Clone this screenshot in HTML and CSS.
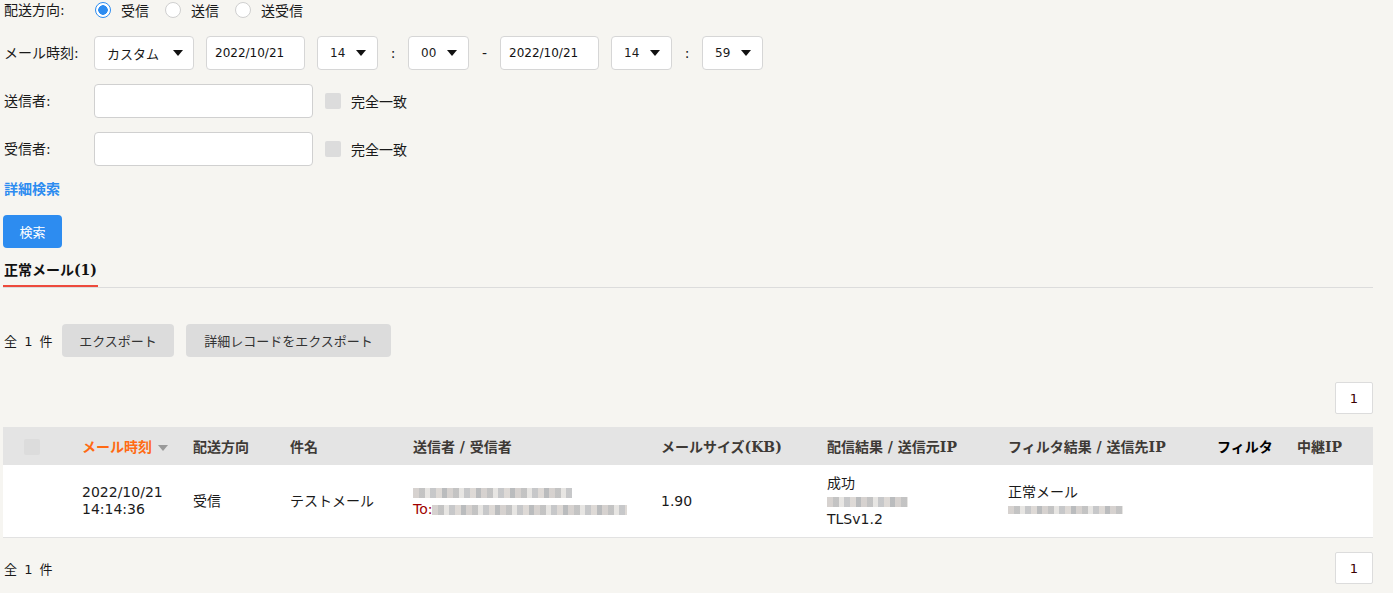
FILE: index.html
```html
<!DOCTYPE html>
<html>
<head>
  <title>メール検索</title>
  <link rel="stylesheet" href="styles.css">
</head>
<body>
  <div class="page">
    <div class="search-form">
      <div class="form-row row-radio">
        <label class="form-label">配送方向:</label>
        <span class="radio checked"></span><span class="radio-text">受信</span>
        <span class="radio"></span><span class="radio-text">送信</span>
        <span class="radio"></span><span class="radio-text">送受信</span>
      </div>

      <div class="form-row row-field">
        <label class="form-label">メール時刻:</label>
        <div class="select sel-range"><span>カスタム</span><i class="arrow"></i></div>
        <input class="date-input" type="text" value="2022/10/21">
        <div class="select sel-time"><span>14</span><i class="arrow"></i></div>
        <span class="sep">:</span>
        <div class="select sel-time"><span>00</span><i class="arrow"></i></div>
        <span class="sep dash">-</span>
        <input class="date-input" type="text" value="2022/10/21">
        <div class="select sel-time"><span>14</span><i class="arrow"></i></div>
        <span class="sep">:</span>
        <div class="select sel-time"><span>59</span><i class="arrow"></i></div>
      </div>

      <div class="form-row row-field">
        <label class="form-label">送信者:</label>
        <input class="text-input" type="text">
        <span class="checkbox"></span><span class="check-text">完全一致</span>
      </div>

      <div class="form-row row-field">
        <label class="form-label">受信者:</label>
        <input class="text-input" type="text">
        <span class="checkbox"></span><span class="check-text">完全一致</span>
      </div>

      <div class="detail-link"><a href="#">詳細検索</a></div>
      <button class="btn-primary">検索</button>
    </div>

    <div class="tab-bar">
      <span class="tab active">正常メール(1)</span>
    </div>

    <div class="toolbar">
      <span class="total">全 1 件</span>
      <button class="btn-gray btn-export">エクスポート</button>
      <button class="btn-gray btn-detail">詳細レコードをエクスポート</button>
    </div>

    <div class="pager"><span class="page-box">1</span></div>

    <table class="mail-table">
      <colgroup>
        <col style="width: 67px">
        <col style="width: 111px">
        <col style="width: 97px">
        <col style="width: 123px">
        <col style="width: 248px">
        <col style="width: 166px">
        <col style="width: 181px">
        <col style="width: 209px">
        <col style="width: 80px">
        <col style="width: 88px">
      </colgroup>
      <thead>
        <tr>
          <th class="col-check"><span class="checkbox"></span></th>
          <th class="sorted">メール時刻 <i class="sort-arrow"></i></th>
          <th>配送方向</th>
          <th>件名</th>
          <th>送信者 / 受信者</th>
          <th>メールサイズ(KB)</th>
          <th>配信結果 / 送信元IP</th>
          <th>フィルタ結果 / 送信先IP</th>
          <th class="dark">フィルタ</th>
          <th>中継IP</th>
        </tr>
      </thead>
      <tbody>
        <tr>
          <td></td>
          <td class="lines">2022/10/21<br>14:14:36</td>
          <td>受信</td>
          <td>テストメール</td>
          <td class="lines">
            <span class="blur" style="width: 159px"></span><br>
            <span class="to">To:</span><span class="blur" style="width: 195px"></span>
          </td>
          <td>1.90</td>
          <td class="lines tall">
            成功<br>
            <span class="blur" style="width: 81px"></span><br>
            TLSv1.2
          </td>
          <td class="lines">
            正常メール<br>
            <span class="blur short" style="width: 115px"></span>
          </td>
          <td></td>
          <td></td>
        </tr>
      </tbody>
    </table>

    <div class="footer-bar">
      <span class="total">全 1 件</span>
      <span class="page-box">1</span>
    </div>
  </div>
</body>
</html>
```

FILE: styles.css
```css
/* base */
body {
  margin: 0;
  background-color: #f6f5f1;
  font-family: "DejaVu Sans", "Noto Sans CJK JP", sans-serif;
  font-size: 14px;
  color: #1a1a1a;
}

.page {
  padding: 0 20px 0 3px;
}

/* search form */
.form-row {
  display: flex;
  align-items: center;
}
.row-radio {
  height: 20px;
}
.row-field {
  height: 34px;
  margin-top: 14px;
}
.row-radio + .row-field {
  margin-top: 16px;
}
.form-label {
  width: 90px;
  padding-left: 1px;
  line-height: 20px;
}

.radio {
  width: 14px;
  height: 14px;
  border: 1px solid #cfcfcf;
  border-radius: 50%;
  background: #fff;
  margin: 0 10px 0 1px;
}
.radio.checked {
  border-color: #2d8cf0;
  background: radial-gradient(circle, #2d8cf0 0 4.5px, #fff 5px);
}
.radio-text {
  margin-right: 15px;
}

.select {
  display: flex;
  align-items: center;
  justify-content: space-between;
  height: 34px;
  box-sizing: border-box;
  border: 1px solid #d6d6d6;
  border-radius: 4px;
  background: #fff;
  font-size: 13px;
}
.select span {
  font-size: 12px;
}
.sel-range {
  width: 100px;
  padding: 0 10px 0 12px;
  margin-right: 12px;
}
.sel-range span {
  font-size: 13px;
}
.sel-time {
  width: 61px;
  padding: 0 11px 0 12px;
}
.arrow {
  width: 0;
  height: 0;
  border-left: 5px solid transparent;
  border-right: 5px solid transparent;
  border-top: 6px solid #111;
}

.date-input {
  width: 99px;
  height: 34px;
  box-sizing: border-box;
  border: 1px solid #d6d6d6;
  border-radius: 4px;
  padding: 0 8px;
  margin-right: 12px;
  font-family: inherit;
  font-size: 12px;
  color: #111;
}
.sep {
  width: 30px;
  text-align: center;
  font-size: 14px;
}
.sep.dash {
  width: 31px;
}

.text-input {
  width: 219px;
  height: 34px;
  box-sizing: border-box;
  border: 1px solid #d0d0d0;
  border-radius: 4px;
  background: #fff;
  margin-right: 12px;
}
.checkbox {
  display: inline-block;
  width: 16px;
  height: 16px;
  background: #dcdcdc;
  border-radius: 2px;
  margin-right: 10px;
}

.detail-link {
  margin-top: 13px;
  line-height: 20px;
  padding-left: 1px;
}
.detail-link a {
  color: #2d8cf0;
  font-size: 14px;
  font-weight: bold;
  text-decoration: none;
}

.btn-primary {
  display: block;
  margin-top: 16px;
  width: 59px;
  height: 33px;
  border: none;
  border-radius: 4px;
  background: #2d8cf0;
  color: #fff;
  font-family: inherit;
  font-size: 13px;
}

/* tabs */
.tab-bar {
  margin-top: 4px;
  border-bottom: 1px solid #dcdcdc;
}
.tab {
  display: inline-block;
  padding: 6px 1px 3px 1px;
  line-height: 24px;
  border-bottom: 2px solid #ed4a3c;
  font-family: "DejaVu Serif", "Noto Sans CJK JP", serif;
  font-weight: bold;
  font-size: 14px;
  color: #111;
}

/* toolbar */
.toolbar {
  display: flex;
  align-items: center;
  margin-top: 36px;
}
.total {
  padding-left: 1px;
  width: 58px;
  font-size: 13px;
  word-spacing: 3px;
}
.btn-gray {
  height: 33px;
  margin-right: 12px;
  border: none;
  border-radius: 4px;
  background: #dcdcdc;
  color: #333;
  font-family: "Noto Sans CJK JP", sans-serif;
  font-size: 13px;
}
.btn-export {
  width: 112px;
}
.btn-detail {
  width: 205px;
}

.pager {
  display: flex;
  justify-content: flex-end;
  margin-top: 25px;
}
.page-box {
  display: inline-flex;
  align-items: center;
  justify-content: center;
  width: 38px;
  height: 32px;
  box-sizing: border-box;
  border: 1px solid #dcdcdc;
  border-radius: 2px;
  background: #fff;
  font-size: 13px;
  color: #3a0000;
}

/* table */
.mail-table {
  margin-top: 13px;
  width: 1370px;
  table-layout: fixed;
  border-collapse: collapse;
}
.mail-table th {
  height: 38px;
  padding: 0 0 0 12px;
  background: #e4e4e4;
  text-align: left;
  font-family: "DejaVu Serif", "Noto Sans CJK JP", serif;
  font-weight: bold;
  font-size: 14px;
  color: #3e3a36;
  white-space: nowrap;
}
.mail-table th.col-check {
  padding-left: 21px;
}
.mail-table th .checkbox {
  vertical-align: middle;
}
.mail-table th.sorted {
  color: #ff6a13;
}
.mail-table th.dark {
  color: #000;
}
.sort-arrow {
  display: inline-block;
  width: 0;
  height: 0;
  border-left: 5px solid transparent;
  border-right: 5px solid transparent;
  border-top: 6px solid #999;
  vertical-align: middle;
  margin-left: 1px;
}
.mail-table td {
  height: 72px;
  padding: 0 0 0 12px;
  background: #fff;
  border-bottom: 1px solid #e2e2e2;
  line-height: 18px;
  vertical-align: middle;
}
.mail-table td.lines {
  line-height: 17px;
}
.mail-table td.tall {
  line-height: 18px;
}
.to {
  color: #a00000;
}
.blur {
  display: inline-block;
  height: 10px;
  vertical-align: middle;
  background: repeating-linear-gradient(90deg,
    #cfcac7 0 6px, #b9b9b9 6px 12px, #e3e1de 12px 17px,
    #bdbec0 17px 23px, #d8d3cf 23px 29px, #aeb0b2 29px 34px);
  opacity: 0.85;
}
.blur.short {
  height: 8px;
}

.footer-bar {
  display: flex;
  justify-content: space-between;
  align-items: center;
  margin-top: 14px;
  width: 1370px;
}
```
